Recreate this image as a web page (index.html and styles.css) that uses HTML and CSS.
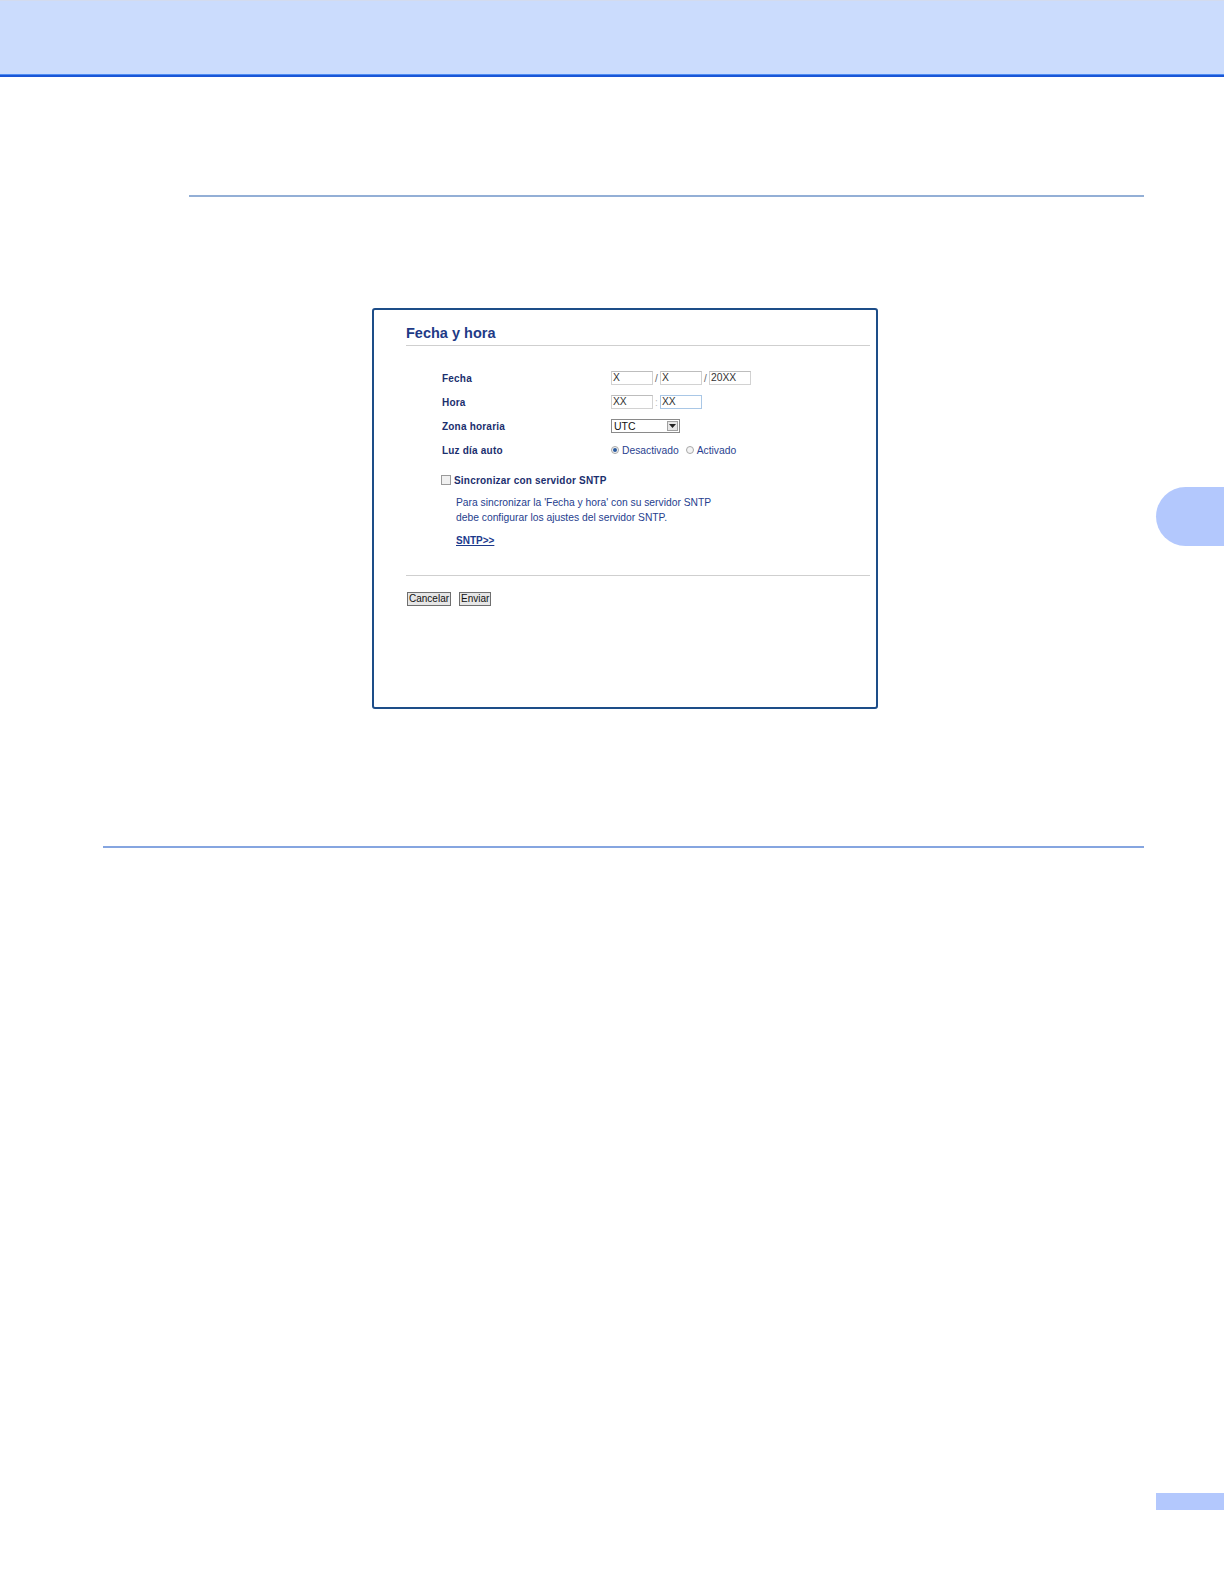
FILE: index.html
```html
<!DOCTYPE html>
<html lang="es">
<head>
<meta charset="utf-8">
<title>Fecha y hora</title>
<link rel="stylesheet" href="styles.css">
</head>
<body>
<div class="page">
  <div class="header"></div>
  <div class="header-line1"></div>
  <div class="header-line2"></div>

  <div class="rule rule-top"></div>

  <div class="frame">
    <div class="title">Fecha y hora</div>

    <div class="rows">
      <div class="label">Fecha</div>
      <div class="ctrl">
        <span class="box">X</span><span class="sep">/</span><span class="box">X</span><span class="sep">/</span><span class="box">20XX</span>
      </div>

      <div class="label">Hora</div>
      <div class="ctrl">
        <span class="box">XX</span><span class="sep colon">:</span><span class="box focus">XX</span>
      </div>

      <div class="label">Zona horaria</div>
      <div class="ctrl">
        <span class="select"><span class="select-text">UTC</span><span class="select-btn"><svg width="7" height="4" viewBox="0 0 7 4"><path d="M0 0H7L3.5 4Z" fill="#222"/></svg></span></span>
      </div>

      <div class="label">Luz día auto</div>
      <div class="ctrl">
        <span class="radio first on"></span><span class="rtext">Desactivado</span><span class="radio"></span><span class="rtext">Activado</span>
      </div>
    </div>

    <div class="check-row">
      <span class="checkbox"></span><span class="check-label">Sincronizar con servidor SNTP</span>
    </div>

    <div class="note">
      <p>Para sincronizar la 'Fecha y hora' con su servidor SNTP</p>
      <p>debe configurar los ajustes del servidor SNTP.</p>
    </div>

    <div class="link-row"><a class="link" href="#">SNTP&gt;&gt;</a></div>

    <div class="divider"></div>

    <div class="buttons">
      <span class="btn">Cancelar</span><span class="btn">Enviar</span>
    </div>
  </div>

  <div class="rule rule-bottom"></div>

  <div class="side-tab"></div>
  <div class="page-num"></div>
</div>
</body>
</html>
```

FILE: styles.css
```css
html, body {
  margin: 0;
  padding: 0;
  background: #ffffff;
}

.page {
  position: relative;
  width: 1224px;
  height: 1584px;
  font-family: "Liberation Sans", Arial, sans-serif;
}

.header {
  height: 74px;
  background: #cbdcfd;
  border-top: 1px solid #d3dbee;
  box-sizing: border-box;
}

.header-line1 {
  height: 1px;
  background: #4f8cf2;
}

.header-line2 {
  height: 2px;
  background: #1a56d6;
}

.rule {
  height: 2px;
}

.rule-top {
  margin-top: 118px;
  margin-left: 189px;
  width: 955px;
  background: #93afd6;
}

.rule-bottom {
  margin-top: 137px;
  margin-left: 103px;
  width: 1041px;
  background: #85a5e0;
}

.frame {
  margin-top: 111px;
  margin-left: 372px;
  width: 506px;
  height: 401px;
  box-sizing: border-box;
  border: 2px solid #1d4d88;
  border-radius: 3px;
  padding: 14px 6px 0 32px;
}

.title {
  font-size: 14.5px;
  font-weight: bold;
  line-height: 18px;
  color: #1e3a86;
  padding-bottom: 3px;
  border-bottom: 1px solid #cfcfcf;
}

.rows {
  margin-top: 20px;
  padding-left: 36px;
  display: grid;
  grid-template-columns: 169px 1fr;
  grid-auto-rows: 24px;
  align-items: center;
}

.label {
  font-size: 10px;
  font-weight: bold;
  color: #1b2f6e;
  letter-spacing: 0.2px;
}

.ctrl {
  display: flex;
  align-items: center;
  font-size: 10px;
  color: #222;
}

.box {
  display: inline-block;
  width: 42px;
  height: 14px;
  box-sizing: border-box;
  border: 1px solid #d2d2d2;
  border-top-color: #bdbdbd;
  padding-left: 1px;
  line-height: 12px;
  font-size: 10.3px;
  color: #333;
}

.box.focus {
  border-color: #a9c7e6;
}

.sep {
  width: 7px;
  text-align: center;
  color: #666;
  font-size: 10px;
}

.sep.colon {
  color: #bbb;
}

.select {
  display: inline-flex;
  align-items: center;
  justify-content: space-between;
  width: 69px;
  height: 14px;
  box-sizing: border-box;
  border: 1px solid #8a8a8a;
  padding: 0 1px 0 2px;
}

.select-text {
  font-size: 10.5px;
  line-height: 12px;
  color: #111;
}

.select-btn {
  display: inline-flex;
  align-items: center;
  justify-content: center;
  width: 11px;
  height: 10px;
  box-sizing: border-box;
  border: 1px solid #a0a0a0;
  background: #e6e6e6;
}

.radio {
  display: inline-block;
  width: 8px;
  height: 8px;
  box-sizing: border-box;
  border: 1px solid #a8a8a8;
  border-radius: 50%;
  background: #f4f4f4;
  margin-left: 3px;
  margin-right: 3px;
  position: relative;
}

.radio.first {
  margin-left: 0;
}

.radio.on::after {
  content: "";
  position: absolute;
  left: 1px;
  top: 1px;
  width: 4px;
  height: 4px;
  border-radius: 50%;
  background: #2a5a9e;
}

.rtext {
  font-size: 10.3px;
  color: #2a3f8f;
  margin-right: 4px;
}

.check-row {
  margin-top: 10px;
  padding-left: 35px;
  display: flex;
  align-items: center;
  height: 16px;
}

.checkbox {
  display: inline-block;
  width: 10px;
  height: 10px;
  box-sizing: border-box;
  border: 1px solid #9a9a9a;
  background: #f0f0f0;
  margin-right: 3px;
}

.check-label {
  font-size: 10px;
  font-weight: bold;
  color: #1b2f6e;
  letter-spacing: 0.2px;
}

.note {
  margin-top: 7px;
  padding-left: 50px;
}

.note p {
  margin: 0;
  font-size: 10.3px;
  line-height: 15px;
  color: #26408e;
}

.link-row {
  margin-top: 6px;
  padding-left: 50px;
  height: 16px;
  line-height: 16px;
}

.link {
  font-size: 10px;
  font-weight: bold;
  color: #1c3a8c;
  text-decoration: underline;
}

.divider {
  margin-top: 28px;
  height: 1px;
  background: #cfcfcf;
}

.buttons {
  margin-top: 16px;
  margin-left: 1px;
  display: flex;
  gap: 8px;
}

.btn {
  display: inline-block;
  height: 14px;
  box-sizing: border-box;
  border: 1px solid #6f6f6f;
  background: #e6e6e6;
  font-size: 10px;
  line-height: 12px;
  padding: 0 1px;
  color: #111;
}

.side-tab {
  position: absolute;
  left: 1156px;
  top: 487px;
  width: 68px;
  height: 59px;
  background: #b3c8fd;
  border-radius: 30px 0 0 30px;
}

.page-num {
  position: absolute;
  left: 1156px;
  top: 1493px;
  width: 68px;
  height: 17px;
  background: #b3c8fd;
}
```
